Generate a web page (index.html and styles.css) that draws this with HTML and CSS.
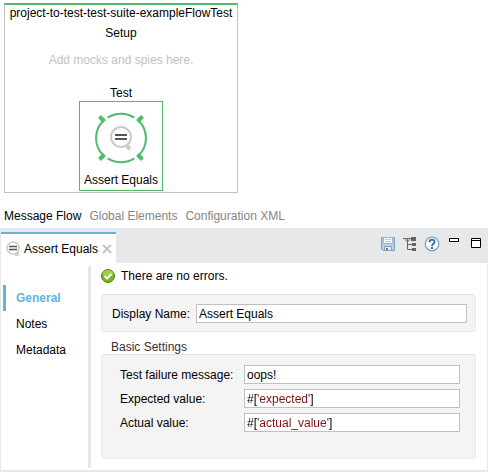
FILE: index.html
```
<!DOCTYPE html>
<html lang="en">
<head>
<meta charset="utf-8">
<title>Flow editor</title>
<link rel="stylesheet" href="styles.css">
</head>
<body>
<main class="editor">
  <section class="canvas">
    <div class="flow">
      <h1 class="flow-title">project-to-test-test-suite-exampleFlowTest</h1>
      <h2 class="flow-setup">Setup</h2>
      <p class="flow-hint">Add mocks and spies here.</p>
      <h2 class="flow-test">Test</h2>
      <button class="node" type="button">
        <svg class="node-icon" width="54" height="54" viewBox="0 0 54 54" fill="none" aria-hidden="true">
          <g stroke="#4dbc6b" stroke-width="2">
            <path d="M13.700 6.600A24.300 24.300 0 0 1 40.300 6.600"/>
            <path d="M13.700 47.400A24.300 24.300 0 0 0 40.300 47.400"/>
            <path d="M9 10A24.300 24.300 0 0 0 9 44"/>
            <path d="M45 10A24.300 24.300 0 0 1 45 44"/>
            <path stroke-width="4" d="M5.500 5.500L10.500 10.500M48.500 5.500L43.500 10.500M5.500 48.500L10.500 43.500M48.500 48.500L43.500 43.500"/>
          </g>
          <circle cx="27" cy="26" r="10" stroke="#cbcbcd" stroke-width="2"/>
          <path d="M32 34L36 38" stroke="#cbcbcd" stroke-width="4"/>
          <path d="M32 35L36 31" stroke="#cbcbcd" stroke-width="2"/>
          <path d="M21 24H33M21 28H33" stroke="#555" stroke-width="2"/>
        </svg>
        <span>Assert Equals</span>
      </button>
    </div>
  </section>

  <nav class="views">
    <a class="view view-active" href="#flow">Message Flow</a>
    <a class="view" href="#global">Global Elements</a>
    <a class="view" href="#xml">Configuration XML</a>
  </nav>

  <section class="panel">
    <header class="panel-bar">
      <div class="tab">
        <svg width="14" height="16" viewBox="0 0 14 16" fill="none" aria-hidden="true">
          <circle cx="7" cy="7" r="6" stroke="#cbcbcd" stroke-width="1.500"/>
          <path d="M9 14L13 12M11 12L12 15" stroke="#cbcbcd" stroke-width="2"/>
          <path d="M3 5.500H11M3 8.500H11" stroke="#555" stroke-width="1.500"/>
        </svg>
        <span>Assert Equals</span>
        <button class="icon-button" type="button" aria-label="Close">
          <svg width="10" height="10" viewBox="0 0 10 10" aria-hidden="true"><path d="M1 1L9 9M9 1L1 9" stroke="#c4c4c6" stroke-width="2"/></svg>
        </button>
      </div>
      <div class="tools">
        <button class="icon-button" type="button" aria-label="Save">
          <svg width="16" height="16" viewBox="0 0 16 16" aria-hidden="true">
            <path d="M1.500 1.500H14.500V14.500H3L1.500 13Z" fill="#b7cfe8" stroke="#7f9cbc"/>
            <path d="M3.500 1.500H12.500V7.500H3.500Z" fill="#f8fafc" stroke="#9db3ca"/>
            <path d="M5 3.500H11M5 5.500H11" stroke="#c0cad4"/>
            <path d="M4.500 10.500H11.500V14.500H4.500Z" fill="#edf2f6" stroke="#7f9cbc"/>
            <path d="M6 12H8V14H6Z" fill="#5b7490"/>
          </svg>
        </button>
        <button class="icon-button" type="button" aria-label="Tree">
          <svg width="14" height="16" viewBox="0 0 14 16" fill="none" aria-hidden="true">
            <path d="M0 2.500H8M4.500 2V13.500H10M4.500 8.500H10" stroke="#666"/>
            <path d="M1 2L4.500 6L8 2" stroke="#777"/>
            <path d="M8 1H13V5H8ZM9 7H13V10H9ZM9 12H13V15H9Z" fill="#666"/>
          </svg>
        </button>
        <button class="icon-button" type="button" aria-label="Help">
          <svg width="16" height="16" viewBox="0 0 16 16" fill="none" aria-hidden="true">
            <circle cx="8" cy="8" r="6.800" fill="#fafcff" stroke="#7ba5cd" stroke-width="1.300"/>
            <path d="M5.500 6.200C5.500 2.800 10.700 3 10.500 6C10.400 7.700 8 7.800 8 10" stroke="#326da8" stroke-width="1.800"/>
            <path d="M7 11H9V13H7Z" fill="#326da8"/>
          </svg>
        </button>
        <button class="icon-button window-button" type="button" aria-label="Minimize">
          <svg width="10" height="14" viewBox="0 0 10 14" aria-hidden="true"><path d="M.5 2.500H9.500V5.500H.5Z" fill="#fff" stroke="#000"/></svg>
        </button>
        <button class="icon-button window-button" type="button" aria-label="Maximize">
          <svg width="10" height="14" viewBox="0 0 10 14" aria-hidden="true"><path d="M.5 2.500H9.500V11.500H.5ZM1 4.500H9" fill="#fff" stroke="#000"/></svg>
        </button>
      </div>
    </header>

    <div class="panel-body">
      <nav class="side">
        <a class="side-item side-active" href="#general">General</a>
        <a class="side-item" href="#notes">Notes</a>
        <a class="side-item" href="#metadata">Metadata</a>
      </nav>
      <form class="form">
        <p class="status">
          <svg width="14" height="14" viewBox="0 0 14 14" fill="none" aria-hidden="true">
            <circle cx="7" cy="7" r="6.500" fill="#76b51b" stroke="#4b820c"/>
            <path d="M1.500 6A5.500 5 0 0 1 12.500 6Q7 8 1.500 6Z" fill="#9bd044"/>
            <path d="M3.500 7L6 9.500L10.500 5" stroke="#fff" stroke-width="2"/>
          </svg>
          <span>There are no errors.</span>
        </p>
        <div class="group group-name">
          <label for="name">Display Name:</label>
          <input class="field" id="name" type="text" value="Assert Equals">
        </div>
        <h3 class="group-title">Basic Settings</h3>
        <div class="group group-settings">
          <label for="message">Test failure message:</label>
          <input class="field" id="message" type="text" value="oops!">
          <label for="expected">Expected value:</label>
          <span class="field expression"><input class="code code-expected" id="expected" type="text" value="#['expected']"></span>
          <label for="actual">Actual value:</label>
          <span class="field expression"><input class="code code-actual" id="actual" type="text" value="#['actual_value']"></span>
        </div>
      </form>
    </div>
  </section>
</main>
</body>
</html>
```
FILE: styles.css
```
* {
  box-sizing: border-box;
}

body {
  margin: 0;
  background: #fff;
  color: #000;
  font: 12px/16px "Liberation Sans", Arial, sans-serif;
}

h1, h2, h3, p {
  margin: 0;
  font-size: inherit;
  font-weight: normal;
}

a {
  color: inherit;
  text-decoration: none;
}

button, input {
  font: inherit;
  color: inherit;
}

/* Flow canvas */
.canvas {
  display: flex;
  padding: 3px 4px 0;
}

.flow {
  display: flex;
  flex-direction: column;
  align-items: center;
  min-width: 234px;
  padding-bottom: 1px;
  border: 1px solid #c2c2c4;
  border-top: 2px solid #4dbc6b;
}

.flow-setup {
  margin-top: 4px;
}

.flow-hint {
  margin-top: 11px;
  color: #c2c2c2;
}

.flow-test {
  margin-top: 17px;
}

.node {
  display: flex;
  flex-direction: column;
  align-items: center;
  justify-content: space-between;
  height: 90px;
  padding: 9px 4px 2px;
  border: 1px solid #4dbc6b;
  background: #fff;
}

/* View switcher */
.views {
  display: flex;
  gap: 8px;
  padding: 15px 4px 4px;
}

.view {
  color: #858585;
}

.view-active {
  color: #000;
}

/* Properties panel */
.panel {
  border: 1px solid #e7e8ea;
  border-width: 4px 1px 2px;
}

.panel-bar {
  display: flex;
  justify-content: space-between;
  background: #e7e8ea;
}

.tab {
  display: flex;
  align-items: center;
  gap: 4px;
  height: 31px;
  padding: 0 4px 0 5px;
  border-top: 2px solid #62b3de;
  background: #fff;
}

.icon-button {
  display: flex;
  padding: 0;
  border: 0;
  background: none;
}

.tools {
  display: flex;
  gap: 7px;
  padding: 4px 6px 0 0;
}

.window-button {
  margin-left: 2px;
}

.window-button + .window-button {
  margin-left: 5px;
}

.panel-body {
  display: flex;
  padding: 3px 11px 2px 2px;
}

.side {
  width: 88px;
  padding-top: 19px;
  border-right: 3px solid #e7e8ea;
}

.side-item {
  display: block;
  padding: 5px 10px;
  border-left: 3px solid transparent;
}

.side-active {
  border-color: #62b3de;
  color: #62b3de;
  font-weight: bold;
}

.form {
  flex: 1;
  padding: 2px 0 9px 10px;
}

.status {
  display: flex;
  align-items: center;
  gap: 6px;
}

.group {
  display: grid;
  align-items: center;
  border: 1px solid #e9e9e9;
  border-top-color: #e1e1e1;
  border-radius: 4px;
  background: #f4f4f4;
}

.group-name {
  grid-template-columns: 80px 1fr;
  gap: 4px;
  margin-top: 10px;
  padding: 9px 8px 8px 10px;
}

.group-title {
  margin: 8px 0 0 10px;
  color: #333;
  line-height: 14px;
}

.group-settings {
  grid-template-columns: 116px 1fr;
  gap: 5px 8px;
  padding: 10px 15px 26px 18px;
}

label {
  white-space: nowrap;
}

.field {
  width: 100%;
  min-width: 0;
  height: 19px;
  padding: 0 2px;
  border: 1px solid #c0c0c0;
  background: #fff;
}

/* Expression fields: string literals are coloured inside the value */
.expression {
  display: flex;
}

.code {
  width: 100%;
  padding: 0;
  border: 0;
  -webkit-background-clip: text;
  background-clip: text;
  color: transparent;
  caret-color: #000;
}

.code-expected {
  background-image: linear-gradient(90deg, #000 10px, #7c1010 10px 63px, #000 63px);
}

.code-actual {
  background-image: linear-gradient(90deg, #000 10px, #7c1010 10px 82px, #000 82px);
}
```
